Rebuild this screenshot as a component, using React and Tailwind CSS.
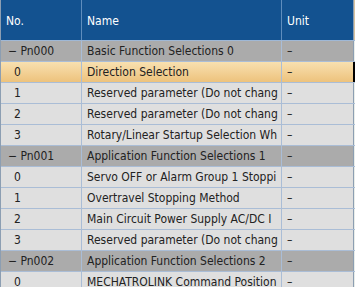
import React from "react";

// names are shown as the grid clips them
const groups = [
  {
    no: "Pn000",
    name: "Basic Function Selections 0",
    rows: [
      "Direction Selection",
      "Reserved parameter (Do not chang",
      "Reserved parameter (Do not chang",
      "Rotary/Linear Startup Selection Wh",
    ],
  },
  {
    no: "Pn001",
    name: "Application Function Selections 1",
    rows: [
      "Servo OFF or Alarm Group 1 Stoppi",
      "Overtravel Stopping Method",
      "Main Circuit Power Supply AC/DC I",
      "Reserved parameter (Do not chang",
    ],
  },
  {
    no: "Pn002",
    name: "Application Function Selections 2",
    rows: ["MECHATROLINK Command Position"],
  },
];

const selected = "Pn000-0";

const Row = ({ kind, no, name, active }) => {
  const bg =
    kind === "group"
      ? "bg-[#ababab]"
      : active
      ? "bg-gradient-to-b from-[#f8e0b0] to-[#edc27c]"
      : "bg-[#dfdfdf]";
  return (
    <div className={`flex h-[21px] border-b border-[#aabdd6] ${bg}`}>
      <div
        className={`w-[81px] shrink-0 flex items-center border-r border-[#aabdd6] ${
          kind === "group" ? "pl-[7px]" : "pl-[13px]"
        }`}
      >
        {kind === "group" ? `− ${no}` : no}
      </div>
      <div className="w-[200px] shrink-0 flex items-center pl-[5px] border-r border-[#aabdd6] overflow-hidden whitespace-nowrap">
        {name}
      </div>
      <div className="w-[71px] shrink-0 flex items-center pl-[5px]">–</div>
      <div
        className={`flex-1 ${
          active
            ? "border-2 border-black"
            : "border-l border-[#8c9eb2] bg-[#e9ede9]"
        }`}
      />
    </div>
  );
};

export default function App() {
  return (
    <div
      className="w-[355px] h-[287px] overflow-hidden bg-white text-[12px] text-[#222] border-l border-[#8c9eb2]"
      style={{ fontFamily: '"DejaVu Sans Condensed", "Liberation Sans", sans-serif' }}
    >
      {/* Header */}
      <div className="flex h-[41px] bg-[#135290] text-white border-b border-[#9fb8d6]">
        <div className="w-[81px] shrink-0 flex items-center pl-[5px] pt-[2px] border-r border-[#5f8dbd]">No.</div>
        <div className="w-[200px] shrink-0 flex items-center pl-[5px] pt-[2px] border-r border-[#5f8dbd]">Name</div>
        <div className="w-[71px] shrink-0 flex items-center pl-[5px] pt-[2px]">Unit</div>
        <div className="flex-1 border-l border-[#8c9eb2] bg-[#d9c4a0]" />
      </div>

      {groups.map((g) => (
        <React.Fragment key={g.no}>
          <Row kind="group" no={g.no} name={g.name} />
          {g.rows.map((r, i) => (
            <Row
              key={i}
              kind="item"
              no={String(i)}
              name={r}
              active={`${g.no}-${i}` === selected}
            />
          ))}
        </React.Fragment>
      ))}
    </div>
  );
}
